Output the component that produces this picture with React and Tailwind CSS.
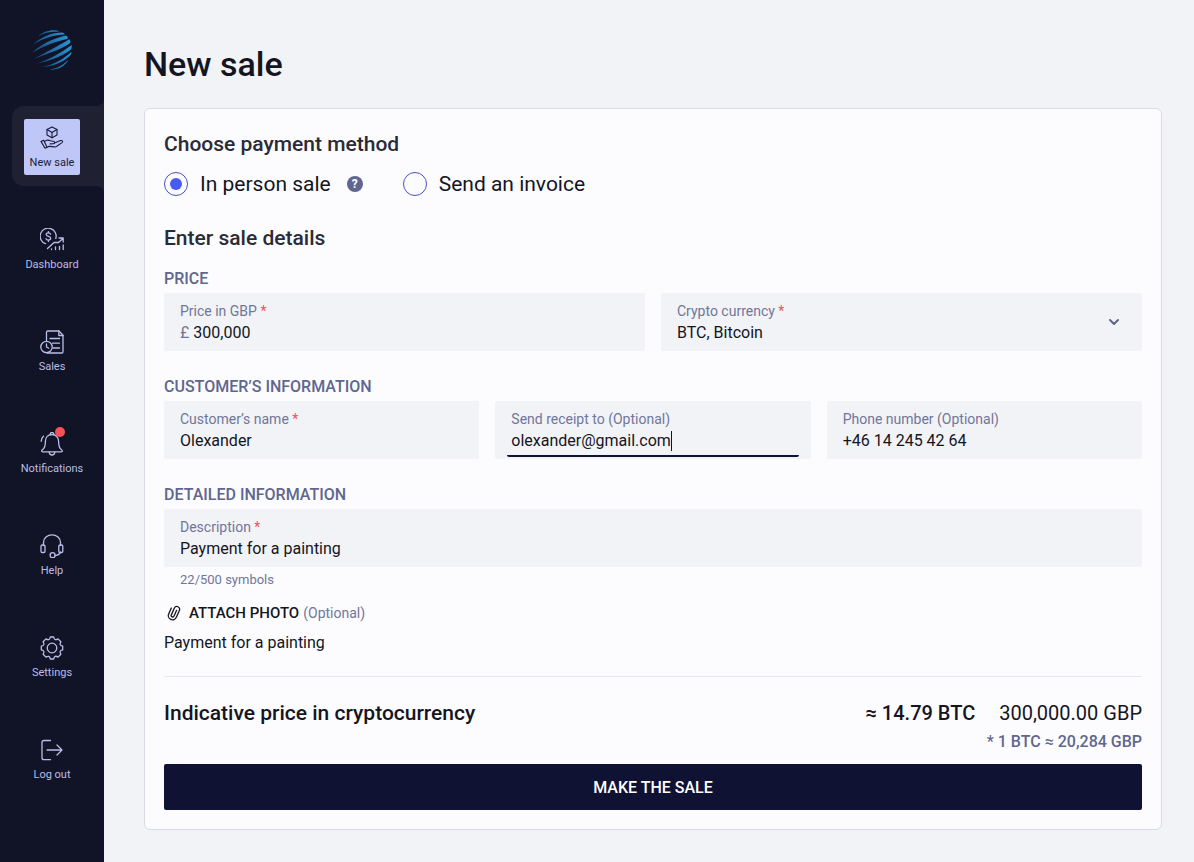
import { useState } from "react";
import { ChevronDown } from "lucide-react";

const iconProps = {
    width: 24,
    height: 24,
    viewBox: "0 0 24 24",
    fill: "none",
    stroke: "currentColor",
    strokeWidth: 1.3,
    strokeLinecap: "round",
    strokeLinejoin: "round",
    "aria-hidden": true,
};

function SaleIcon() {
    return (
        <svg {...iconProps} strokeWidth={1.1}>
            <path d="M12 1l5 2.6v5.4l-5 2.800-5-2.800V3.600z" />
            <path d="M7 3.600l5 2.800 5-2.800M12 6.400v5.400" />
            <path d="M1 15.400l2.700-1.200 3.300 7-2 1z" />
            <path d="M4.200 15.600c2-1.700 4.200-1.900 6.200-.8l2.800.4c1.700.3 1.900 2.400.2 2.600l-3.200.1" />
            <path d="M14.500 17l6-2.400c1.700-.6 2.800.8 1.500 2l-5.200 3.700c-.9.600-1.700.7-2.700.6l-4.300-.5c-1.100-.1-1.800.2-2.800.8" />
        </svg>
    );
}

function DashboardIcon() {
    return (
        <svg {...iconProps}>
            <path d="M5.500 15.700a8 8 0 1 1 10.300-5.200" />
            <path d="M10.600 6.200c-.4-.9-1.200-1.300-2.200-1.300-1.300 0-2.200.7-2.200 1.700 0 2.500 4.500 1.200 4.500 3.700 0 1.100-1 1.800-2.300 1.800-1.200 0-2.100-.5-2.400-1.500M8.400 3.600v1.300M8.400 12.100v1.300" />
            <path d="M7.500 20.500l6.500-6h4.500l4.700-4.300M19 10h4.200v4" />
            <path d="M11.500 20.800v.7M15.500 19v2.500M19.500 18.500v3M23.200 17v4.500" />
        </svg>
    );
}

function SalesIcon() {
    return (
        <svg {...iconProps}>
            <path d="M6.500 10.500V2.200c0-.7.500-1.200 1.200-1.200H19l4 4.300v16.500c0 .7-.5 1.200-1.200 1.200H7" />
            <path d="M18.800 1v4.500H23M10 8.500h9.500M12.500 13.200h7M13 18h6.500" />
            <circle cx="6.500" cy="17" r="5.700" />
            <path d="M6.500 13.800V17l2.200 1.300" />
        </svg>
    );
}

function BellIcon() {
    return (
        <svg {...iconProps}>
            <path d="M12 2.500c-4 0-6.600 2.900-6.600 6.800 0 4.200-.6 6.700-2.400 7.900-2 1.300-1.500 2.600-.5 2.600h19c1 0 1.500-1.300-.5-2.600-1.800-1.200-2.400-3.700-2.400-7.900 0-3.900-2.600-6.800-6.600-6.800z" />
            <path d="M10.400 2.600a1.700 1.700 0 1 1 3.200 0M9.200 20c.2 4 5.400 4 5.600 0M1.200 9.200c.1-2 .9-3.800 2.200-5" />
        </svg>
    );
}

function HelpIcon() {
    return (
        <svg {...iconProps}>
            <path d="M3.500 11.500V8.600a8.500 7.800 0 0 1 17 0v2.900M20.500 18c-.5 2-3 3.300-5.500 3.600" />
            <rect x="1" y="11" width="4" height="7.500" rx="1.200" />
            <rect x="18.800" y="11" width="4" height="7.500" rx="1.200" />
            <circle cx="12.600" cy="21.200" r="2.500" />
        </svg>
    );
}

function SettingsIcon() {
    return (
        <svg {...iconProps}>
            <path d="M10.300 1h3.400c.5 2.800 2 3.400 4.300 1.900l2.900 2.900c-1.600 2.300-1 3.700 1.800 4.300v3.800c-2.800.5-3.400 2-1.800 4.300L18 21.100c-2.300-1.600-3.800-1-4.300 1.900h-3.400c-.5-2.800-2-3.400-4.300-1.900l-2.900-2.900c1.600-2.300 1-3.700-1.800-4.300v-3.800c2.800-.5 3.400-2 1.800-4.300L6 2.900C8.300 4.400 9.800 3.800 10.300 1z" />
            <circle cx="12" cy="12" r="4.800" />
        </svg>
    );
}

function LogoutIcon() {
    return (
        <svg {...iconProps}>
            <path d="M10.500 2.500H4c-1.200 0-2 .8-2 2v15.200c0 1.200.8 2 2 2h6.500M7 12h15M17 7l5 5-5 5" />
        </svg>
    );
}

function ClipIcon() {
    return (
        <svg {...iconProps} width={16} height={16} viewBox="0 0 16 16" strokeWidth={1.3}>
            <g transform="rotate(24 8 8)">
                <path d="M3.500 4.500v6.500a4 4 0 0 0 8.400 0V3.500a2.800 2.800 0 0 0-5.600 0v7.300a1.500 1.500 0 0 0 3 0V4.500" />
            </g>
        </svg>
    );
}

function Logo() {
    return (
        <svg viewBox="0 0 40 40" className="size-10" role="img" aria-label="Home">
            <defs>
                <linearGradient id="stripe" x1="0" y1="0" x2="1" y2="0">
                    <stop offset="0" stopColor="#174a7c" />
                    <stop offset="1" stopColor="#2795d6" />
                </linearGradient>
            </defs>
            <g fill="url(#stripe)" transform="rotate(-7 20 20)">
                <path d="M8 4.500C14 .5 23-1 30 2.500 22 1.300 15 1.800 8 4.500z" />
                <path d="M2 12.500C10 5.500 22 2.500 32.500 3.800c2.200 1.200 2.500 2 1.500 2.400C23 5.500 12 7.500 2 12.500z" />
                <path d="M0 20.500C9 12.500 23 9 35.500 7.200c2 1.300 2.200 2.800.8 3.600C25 12 12 14.500 0 20.500z" />
                <path d="M.5 27C11 22.500 26 17 38.500 11.500c1.200 1.800 1 3.300-.3 4.200C27 21.500 13 23 .5 27z" />
                <path d="M3.500 31.500C15 29.500 28 24.500 40 17.500c.2 2-.3 3.500-1.500 4.500C28 28.500 15 30.500 3.500 31.500z" />
                <path d="M8 35.500C19 35 30 30.500 39.200 24c-.6 2-1.200 3-2.400 4.200C28 34.500 17 36.800 8 35.500z" />
                <path d="M15 39.300c8-.3 14-3 20-7.300-4 5.500-12 9.300-20 7.300z" />
            </g>
        </svg>
    );
}

const navItems = [
    { label: "New sale", icon: SaleIcon, active: true },
    { label: "Dashboard", icon: DashboardIcon },
    { label: "Sales", icon: SalesIcon },
    { label: "Notifications", icon: BellIcon, badge: true },
    { label: "Help", icon: HelpIcon },
    { label: "Settings", icon: SettingsIcon },
    { label: "Log out", icon: LogoutIcon },
];

function Sidebar() {
    return (
        <aside className="flex w-26 shrink-0 flex-col items-center bg-[#111327] pt-[30px]">
            <Logo />
            <nav className="mt-9 flex w-full flex-col gap-[22px]">
                {navItems.map((item) => (
                    <div
                        key={item.label}
                        className={
                            item.active
                                ? "relative ml-3 rounded-l-xl bg-[#1f2032] pt-[13px] pb-[11px] pl-3"
                                : "pt-[13px] pb-[11px] pl-6"
                        }
                    >
                        {item.active && (
                            <svg
                                viewBox="0 0 8 96"
                                className="absolute -top-2 right-0 h-24 w-2"
                                fill="#1f2032"
                                aria-hidden="true"
                            >
                                <path d="M8 0v8H0q8 0 8-8zM8 96v-8H0q8 0 8 8z" />
                            </svg>
                        )}
                        <a
                            href="#"
                            className={
                                item.active
                                    ? "flex size-14 flex-col items-center rounded-xs bg-[#bfc6f8] pt-[7px] text-[#1b1c38]"
                                    : "flex size-14 flex-col items-center pt-[7px] text-[#b9bee6]"
                            }
                        >
                            <span className="relative">
                                <item.icon />
                                {item.badge && (
                                    <span className="absolute -top-[5px] -right-px size-2.5 rounded-full bg-[#fa5058]" />
                                )}
                            </span>
                            <span className="mt-[5px] text-[11px] leading-4 whitespace-nowrap">
                                {item.label}
                            </span>
                        </a>
                    </div>
                ))}
            </nav>
        </aside>
    );
}

function Field({ id, label, required, optional, focused, children }) {
    return (
        <div className="relative rounded-xs bg-[#f2f3f7] px-4 pt-2 pb-1.5">
            <label htmlFor={id} className="block text-sm leading-5 text-[#70769a]">
                {label}
                {required && <span className="text-[#f0525a]"> *</span>}
                {optional && " (Optional)"}
            </label>
            <div className="flex h-6 items-center text-base text-[#14151f]">
                {children}
            </div>
            {focused && (
                <span className="absolute inset-x-3 bottom-0.5 h-0.5 rounded-b-full bg-[#0f1232]" />
            )}
        </div>
    );
}

function SectionTitle({ children }) {
    return (
        <h3 className="pt-px pb-0.5 text-base leading-6 font-medium text-[#5f668f]">
            {children}
        </h3>
    );
}

const radioClass =
    "grid size-6 appearance-none place-content-center rounded-full border border-[#4a50c4] before:size-3 before:rounded-full checked:before:bg-[#4a5cf0]";

export default function App() {
    const [method, setMethod] = useState("person");
    const [price, setPrice] = useState("300,000");
    const [currency, setCurrency] = useState("BTC");
    const [name, setName] = useState("Olexander");
    const [email, setEmail] = useState("olexander@gmail.com");
    const [phone, setPhone] = useState("+46 14 245 42 64");
    const [description, setDescription] = useState("Payment for a painting");

    return (
        <div className="flex min-h-screen bg-[#f2f3f7] font-['Roboto',sans-serif] text-[#14151f]">
            <Sidebar />
            <main className="min-w-0 flex-1 pt-10 pr-8 pb-8 pl-10">
                <h1 className="text-[34px] leading-12 font-medium">New sale</h1>

                <form
                    className="mt-5 rounded-md border border-[#d9dae6] bg-[#fcfcfe] p-[19px]"
                    onSubmit={(e) => e.preventDefault()}
                >
                    <h2 className="text-[21px] leading-8 font-medium text-[#2a2b36]">
                        Choose payment method
                    </h2>
                    <div className="mt-3 flex items-center gap-10 text-[21px] leading-6">
                        <div className="flex items-center">
                            <input
                                type="radio"
                                id="person"
                                name="method"
                                className={radioClass}
                                checked={method === "person"}
                                onChange={() => setMethod("person")}
                            />
                            <label htmlFor="person" className="ml-3">
                                In person sale
                            </label>
                            <button
                                type="button"
                                aria-label="About in person sale"
                                className="ml-4 size-4 rounded-full bg-[#60668f] text-xs leading-4 font-bold text-white"
                            >
                                ?
                            </button>
                        </div>
                        <div className="flex items-center">
                            <input
                                type="radio"
                                id="invoice"
                                name="method"
                                className={radioClass}
                                checked={method === "invoice"}
                                onChange={() => setMethod("invoice")}
                            />
                            <label htmlFor="invoice" className="ml-3">
                                Send an invoice
                            </label>
                        </div>
                    </div>

                    <h2 className="mt-[26px] mb-3 text-[21px] leading-8 font-medium text-[#2a2b36]">
                        Enter sale details
                    </h2>

                    <SectionTitle>PRICE</SectionTitle>
                    <div className="grid grid-cols-2 gap-4">
                        <Field id="price" label="Price in GBP" required>
                            <span className="mr-1 text-[#70769a]">£</span>
                            <input
                                id="price"
                                className="w-full outline-none"
                                value={price}
                                onChange={(e) => setPrice(e.target.value)}
                            />
                        </Field>
                        <Field id="currency" label="Crypto currency" required>
                            <select
                                id="currency"
                                className="w-full appearance-none outline-none"
                                value={currency}
                                onChange={(e) => setCurrency(e.target.value)}
                            >
                                <option value="BTC">BTC, Bitcoin</option>
                            </select>
                            <ChevronDown
                                size={16}
                                strokeWidth={3}
                                className="pointer-events-none absolute inset-y-0 right-5 my-auto text-[#60668f]"
                            />
                        </Field>
                    </div>

                    <div className="mt-[23px]">
                        <SectionTitle>CUSTOMER’S INFORMATION</SectionTitle>
                        <div className="grid grid-cols-3 gap-4">
                            <Field id="name" label="Customer’s name" required>
                                <input
                                    id="name"
                                    className="w-full outline-none"
                                    value={name}
                                    onChange={(e) => setName(e.target.value)}
                                />
                            </Field>
                            <Field id="email" label="Send receipt to" optional focused>
                                <input
                                    id="email"
                                    type="text"
                                    className="field-sizing-content caret-transparent outline-none"
                                    value={email}
                                    onChange={(e) => setEmail(e.target.value)}
                                />
                                <span className="h-5 w-px bg-[#14151f]" />
                            </Field>
                            <Field id="phone" label="Phone number" optional>
                                <input
                                    id="phone"
                                    className="w-full outline-none"
                                    value={phone}
                                    onChange={(e) => setPhone(e.target.value)}
                                />
                            </Field>
                        </div>
                    </div>

                    <div className="mt-[23px]">
                        <SectionTitle>DETAILED INFORMATION</SectionTitle>
                        <Field id="description" label="Description" required>
                            <input
                                id="description"
                                className="w-full outline-none"
                                value={description}
                                onChange={(e) => setDescription(e.target.value)}
                            />
                        </Field>
                        <p className="mt-[3px] pl-4 text-[13px] leading-5 text-[#70769a]">
                            {description.length}/500 symbols
                        </p>
                    </div>

                    <button type="button" className="mt-[11px] flex h-6 items-center">
                        <span className="ml-0.5">
                            <ClipIcon />
                        </span>
                        <span className="ml-[7px] text-[15px] font-medium">ATTACH PHOTO</span>
                        <span className="ml-1 text-sm text-[#70769a]">(Optional)</span>
                    </button>
                    <p className="mt-1.5 text-base leading-6">{description}</p>

                    <hr className="mt-[21px] border-[#e6e7ef]" />

                    <div className="mt-5 flex items-center justify-between">
                        <p className="text-[21px] leading-8 font-medium">
                            Indicative price in cryptocurrency
                        </p>
                        <p className="flex gap-6 text-xl leading-8">
                            <span className="font-medium">≈ 14.79 BTC</span>
                            <span>300,000.00 GBP</span>
                        </p>
                    </div>
                    <p className="mt-px text-right text-base leading-6 font-medium text-[#5f668f]">
                        * 1 BTC ≈ 20,284 GBP
                    </p>

                    <button
                        type="submit"
                        className="mt-2.5 h-[46px] w-full rounded-xs bg-[#0f1232] pt-0.5 text-base font-medium text-white"
                    >
                        MAKE THE SALE
                    </button>
                </form>
            </main>
        </div>
    );
}
